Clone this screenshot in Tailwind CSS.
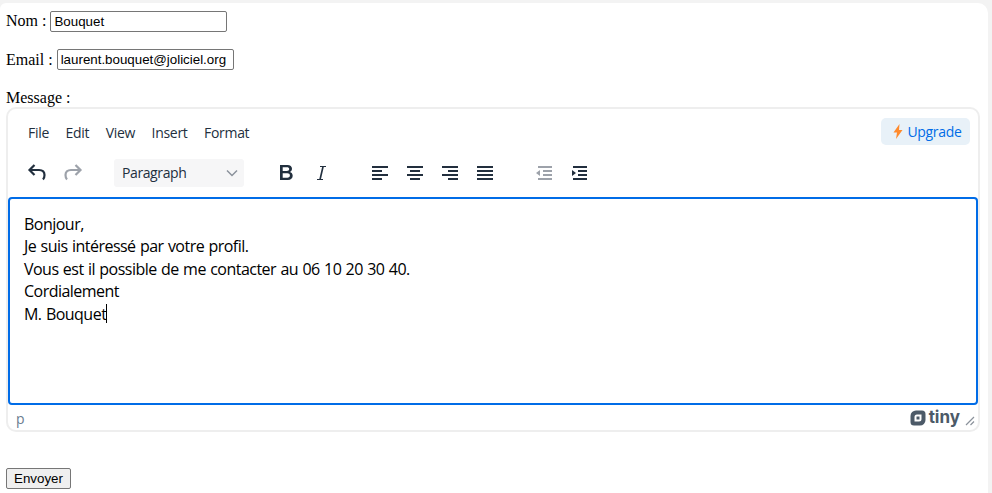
<!DOCTYPE html>
<html lang="fr">
  <head>
    <meta charset="UTF-8" />
    <title>Contact</title>
    <script src="https://cdn.jsdelivr.net/npm/@tailwindcss/browser@4"></script>
  </head>
  <body class="bg-[#f3f3f3] h-[493px] overflow-hidden pt-[3px] pr-[4px] font-['Liberation_Serif',serif] text-[16px] leading-[18px] text-black">
    <form class="bg-white h-[490px] rounded-tr-[10px] rounded-tl-[6px] pl-[6px] pt-[8px]">
      <div class="flex items-center h-[21px] gap-[4px]">
        <label class="-mt-[1px]">Nom :</label>
        <input value="Bouquet" class="w-[177px] h-[21px] border border-[#767676] rounded-[2px] px-[3px] font-['Liberation_Sans',sans-serif] text-[13.33px] text-black bg-white" />
      </div>
      <div class="flex items-center h-[21px] gap-[4px] mt-[17px]">
        <label>Email :</label>
        <input value="laurent.bouquet@joliciel.org" class="w-[177px] h-[21px] border border-[#767676] rounded-[2px] px-[3px] font-['Liberation_Sans',sans-serif] text-[13.33px] text-black bg-white" />
      </div>
      <div class="mt-[19px] h-[18px]">Message :</div>

      <div class="w-[974px] h-[325px] border-2 border-[#eeeeee] rounded-[10px] flex flex-col font-['Open_Sans',sans-serif] text-[#222f3e]">
        <!-- menubar -->
        <div class="h-[44px] flex items-start justify-between pl-[20px] pr-[8px] text-[14px] pt-[9px] tracking-[-0.3px]">
          <div class="flex gap-[16.500px] pt-[6px]">
            <span>File</span>
            <span>Edit</span>
            <span>View</span>
            <span>Insert</span>
            <span>Format</span>
          </div>
          <div class="w-[89px] h-[27px] rounded-[5px] bg-[#e8f1f8] flex items-center justify-center gap-[2px] text-[14px] pl-[2px]">
            <svg width="14" height="17" viewBox="0 0 14 17"><path d="M8.500 1 2.500 9.500h3.500L5 16l6.500-9H8z" fill="#ff8a2c" /></svg>
            <span class="text-[#006ce7]">Upgrade</span>
          </div>
        </div>
        <!-- toolbar -->
        <div class="h-[44px] flex items-start pl-[17px] pt-[6px]">
          <svg width="24" height="24" viewBox="0 0 24 24" fill="none" stroke="#222f3e" stroke-width="2.200" class="mt-[1px]"><path d="M9.500 5 4.500 10 9.500 15M5 10h9c3.500 0 5.500 2 5.500 5 0 2-.5 3.500-1.500 4.500" /></svg>
          <svg class="ml-[12px] mt-[1px]" width="24" height="24" viewBox="0 0 24 24" fill="none" stroke="#9da2aa" stroke-width="2.200"><path d="M14.500 5l5 5-5 5M19 10h-9c-3.500 0-5.500 2-5.500 5 0 2 .5 3.500 1.500 4.500" /></svg>
          <div class="ml-[29px] w-[130px] h-[28px] rounded-[3px] bg-[#f6f6f7] flex items-center justify-between pl-[8px] pr-[6px] text-[14px] tracking-[-0.4px] -mt-[0px]">
            <span>Paragraph</span>
            <svg width="12" height="8" viewBox="0 0 12 8" fill="none" stroke="#8b929b" stroke-width="1.500"><path d="M1 1.500 6 6.500 11 1.500" /></svg>
          </div>
          <svg class="ml-[30px] mt-[2px]" width="24" height="24" viewBox="0 0 24 24" fill="#222f3e"><path fill-rule="evenodd" d="M6 4h7.500c2.800 0 4.500 1.500 4.500 3.700 0 1.500-.8 2.700-2.200 3.300 1.800.5 2.900 1.800 2.900 3.700 0 2.600-1.900 4.300-4.800 4.300H6zm2.700 2.300v3.700h4.100c1.500 0 2.400-.7 2.400-1.900s-.9-1.800-2.400-1.800zm0 5.900v4.500h4.600c1.600 0 2.600-.8 2.600-2.200s-1-2.300-2.600-2.300z" /></svg>
          <svg class="ml-[11px] mt-[2px]" width="24" height="24" viewBox="0 0 24 24" fill="#222f3e"><path d="M11 5h6v1h-2.200l-2.800 12H14v1H8v-1h2.300l2.800-12H11z" /></svg>
          <div class="ml-[35px] flex gap-[11px] mt-[2px]">
            <svg width="24" height="24" viewBox="0 0 24 24" fill="#222f3e"><path d="M4 5h16v2H4zM4 9h10v2H4zM4 13h16v2H4zM4 17h10v2H4z" /></svg>
            <svg width="24" height="24" viewBox="0 0 24 24" fill="#222f3e"><path d="M4 5h16v2H4zM7 9h10v2H7zM4 13h16v2H4zM7 17h10v2H7z" /></svg>
            <svg width="24" height="24" viewBox="0 0 24 24" fill="#222f3e"><path d="M4 5h16v2H4zM10 9h10v2H10zM4 13h16v2H4zM10 17h10v2H10z" /></svg>
            <svg width="24" height="24" viewBox="0 0 24 24" fill="#222f3e"><path d="M4 5h16v2H4zM4 9h16v2H4zM4 13h16v2H4zM4 17h16v2H4z" /></svg>
          </div>
          <div class="ml-[35px] flex gap-[11px] mt-[2px]">
            <svg width="24" height="24" viewBox="0 0 24 24" fill="#9da2aa"><path d="M6 5h14v2H6zM11 9h9v2h-9zM11 13h9v2h-9zM6 17h14v2H6zM4 12l4-3v6z" /></svg>
            <svg width="24" height="24" viewBox="0 0 24 24" fill="#222f3e"><path d="M6 5h14v2H6zM11 9h9v2h-9zM11 13h9v2h-9zM6 17h14v2H6zM9 12l-4-3v6z" /></svg>
          </div>
        </div>
        <!-- edit area -->
        <div class="h-[208px] border-2 border-[#006ce7] rounded-[4px] pt-[14px] pl-[14px] text-[16px] leading-[22.400px] text-[#000] tracking-[-0.520px] [word-spacing:0.700px]">
          <p>Bonjour,</p>
          <p>Je suis intéressé par votre profil.</p>
          <p>Vous est il possible de me contacter au 06 10 20 30 40.</p>
          <p>Cordialement</p>
          <p class="flex items-center"><span>M. Bouquet</span><span class="w-px h-[19px] bg-black"></span></p>
        </div>
        <!-- statusbar -->
        <div class="flex-1 flex items-center justify-between pl-[8px] pr-[3px] text-[14px] text-[#6b7c90] pt-[2px]">
          <span>p</span>
          <div class="flex items-center gap-[5px] -mt-[2px]">
            <div class="flex items-center gap-[3px] text-[#4c5a68] font-bold text-[17px] leading-none font-['Inter',sans-serif]">
              <svg width="16" height="16" viewBox="0 0 16 16"><path fill-rule="evenodd" fill="#4c5a68" d="M6 .5h6a3.500 3.500 0 0 1 3.500 3.500v6a5.500 5.500 0 0 1-5.500 5.500H4A3.500 3.500 0 0 1 .5 12V6A5.500 5.500 0 0 1 6 .5zM7 4.500A2.500 2.500 0 0 0 4.500 7v4.500H9A2.500 2.500 0 0 0 11.500 9V4.500z" /><path fill="#4c5a68" d="M6.500 6.500h3v3h-3z" /></svg>
              <span>tiny</span>
            </div>
            <svg width="10" height="10" viewBox="0 0 10 10" fill="none" stroke="#8b929b" stroke-width="1.200" class="mt-[6px]"><path d="M1 9 9 1M5.500 9 9 5.500" /></svg>
          </div>
        </div>
      </div>

      <button type="button" class="mt-[36px] block h-[21px] w-[65px] border border-[#767676] rounded-[2px] bg-[#efefef] font-['Liberation_Sans',sans-serif] text-[13.33px] text-black leading-none">Envoyer</button>
    </form>
  </body>
</html>
